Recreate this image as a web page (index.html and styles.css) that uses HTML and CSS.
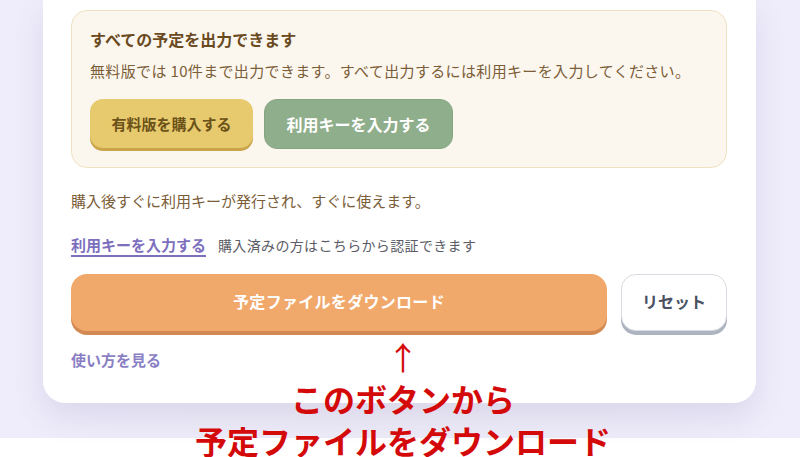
FILE: index.html
```html
<!DOCTYPE html>
<html lang="ja">
<head>
<meta charset="utf-8">
<title>予定ファイルをダウンロード</title>
<link rel="stylesheet" href="styles.css">
</head>
<body>
<div class="stage">
  <div class="card">
    <div class="notice">
      <h2 class="notice-title">すべての予定を出力できます</h2>
      <p class="notice-desc">無料版では 10件まで出力できます。すべて出力するには利用キーを入力してください。</p>
      <div class="notice-actions">
        <button class="btn btn-buy">有料版を購入する</button>
        <button class="btn btn-key">利用キーを入力する</button>
      </div>
    </div>
    <p class="info">購入後すぐに利用キーが発行され、すぐに使えます。</p>
    <div class="key-row">
      <a class="key-link">利用キーを入力する</a>
      <span class="key-note">購入済みの方はこちらから認証できます</span>
    </div>
    <div class="main-actions">
      <button class="btn btn-download">予定ファイルをダウンロード</button>
      <button class="btn btn-reset">リセット</button>
    </div>
    <a class="howto">使い方を見る</a>
  </div>
</div>
<div class="annotation">
  <div class="arrow">↑</div>
  <div>このボタンから</div>
  <div>予定ファイルをダウンロード</div>
</div>
</body>
</html>
```

FILE: styles.css
```css
* { box-sizing: border-box; }

html, body {
  margin: 0;
  padding: 0;
  background: #ffffff;
  font-family: "Noto Sans CJK JP", "Noto Sans", sans-serif;
}

body {
  position: relative;
  width: 800px;
  height: 457px;
  overflow: hidden;
}

.stage {
  background: linear-gradient(90deg, #efedfb 0%, #edebf7 50%, #efedfb 100%);
  padding: 0 44px 35px 43px;
}

.card {
  background: #ffffff;
  border-radius: 0 0 22px 22px;
  padding: 10px 29px 33px 28px;
  box-shadow: 0 14px 30px rgba(90, 80, 150, 0.13);
}

.notice {
  background: #fcf7ee;
  border: 1px solid #efe2c2;
  border-radius: 16px;
  padding: 17px 18px 18px;
}

.notice-title {
  margin: 0;
  font-size: 16px;
  line-height: 22px;
  font-weight: 700;
  color: #6a4a1e;
}

.notice-desc {
  margin: 11px 0 0;
  font-size: 15px;
  line-height: 20px;
  color: #7b5d38;
  letter-spacing: 0.35px;
}

.notice-actions {
  display: flex;
  gap: 11px;
  margin-top: 18px;
}

.btn {
  font-family: inherit;
  font-weight: 700;
  border: none;
  cursor: pointer;
  display: flex;
  align-items: center;
  justify-content: center;
}

.btn-buy {
  height: 49px;
  width: 163px;
  border-radius: 13px;
  background: #e7c96e;
  color: #6b5218;
  font-size: 15px;
  padding-bottom: 2px;
  box-shadow: 0 3px 0 #c9a449;
}

.btn-key {
  height: 50px;
  width: 189px;
  border-radius: 13px;
  background: #8fae8b;
  border: 1px solid #86a584;
  color: #ffffff;
  font-size: 16px;
  padding-bottom: 2px;
}

.info {
  margin: 23px 0 0;
  font-size: 15px;
  line-height: 20px;
  color: #7b5d38;
}

.key-row {
  display: flex;
  align-items: baseline;
  gap: 12px;
  margin-top: 24px;
  line-height: 20px;
}

.key-link {
  font-size: 15px;
  font-weight: 700;
  color: #7d6fbe;
  text-decoration: underline;
  text-decoration-thickness: 2px;
  text-underline-offset: 4px;
}

.key-note {
  font-size: 14px;
  color: #5c5c66;
  letter-spacing: 0.35px;
}

.main-actions {
  display: flex;
  gap: 14px;
  margin-top: 19px;
}

.btn-download {
  flex: 1;
  height: 57px;
  border-radius: 16px;
  background: #f1a86b;
  color: #ffffff;
  font-size: 16px;
  letter-spacing: 0.3px;
  padding-bottom: 4px;
  box-shadow: 0 4px 0 #d38a52;
}

.btn-reset {
  width: 106px;
  height: 57px;
  border-radius: 15px;
  background: #ffffff;
  border: 1px solid #d8dbe1;
  color: #4a5162;
  font-size: 16px;
  padding-bottom: 4px;
  box-shadow: 0 4px 0 #aeb4bf;
}

.howto {
  display: block;
  margin-top: 19px;
  font-size: 15px;
  line-height: 20px;
  font-weight: 700;
  color: #8a7fc4;
}

.annotation {
  position: absolute;
  top: 335px;
  left: 6px;
  right: 0;
  text-align: center;
  font-size: 32px;
  line-height: 42px;
  font-weight: 700;
  color: #d40a0a;
}

.arrow {
  font-weight: 400;
}
```
